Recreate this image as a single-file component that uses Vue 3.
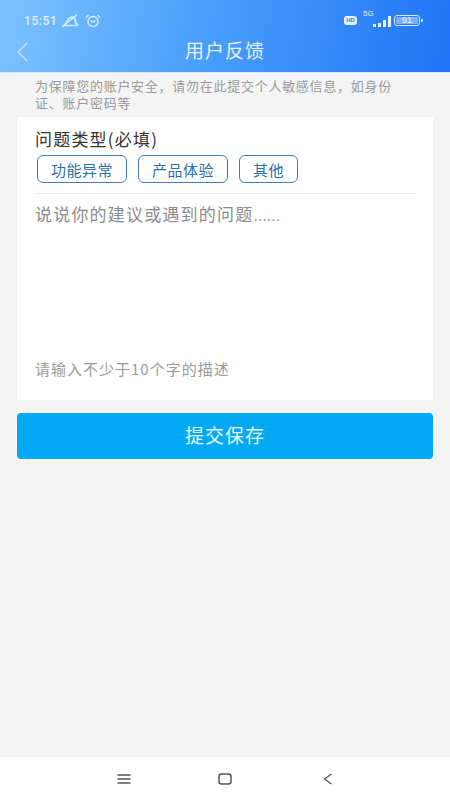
<script setup>
const tags = ['功能异常', '产品体验', '其他']
</script>

<template>
  <div class="page">
    <header class="header">
      <div class="status">
        <div class="status-left">
          <span class="time">15:51</span>
          <svg class="ic-mute" width="19" height="14" viewBox="0 0 19 14" fill="none" stroke="#d6ecff" stroke-width="1.6" stroke-linecap="round">
            <path d="M3 11.500c2-1 2.500-2.500 3.500-5C7.500 4 10 2.500 12.500 3.500c2 1 2 3 2 4.500 0 1 .8 1.800 2 2.200" />
            <path d="M3 11.500h13.500" />
            <path d="M1.500 12.500 15.500 1" />
          </svg>
          <svg class="ic-alarm" width="16" height="14" viewBox="0 0 16 14" fill="none" stroke="#d6ecff" stroke-width="1.500">
            <circle cx="8" cy="7.500" r="5" />
            <path d="M1 3.500 3.500 1M15 3.500 12.500 1" />
            <path d="M5.800 6.500c1 2 3.400 2 4.400 0" />
          </svg>
        </div>
        <div class="status-right">
          <span class="hd">HD</span>
          <div class="signal">
            <span class="five-g">5G</span>
            <div class="bars">
              <i class="b1"></i><i class="b2"></i><i class="b3"></i><i class="b4"></i>
            </div>
          </div>
          <div class="battery"><span class="level">91</span></div>
          <span class="battery-tip"></span>
        </div>
      </div>
      <div class="navbar">
        <svg class="back" width="14" height="20" viewBox="0 0 14 20" fill="none" stroke="#cfe6fd" stroke-width="1.200">
          <path d="M12 1 3 10l9 9" />
        </svg>
        <h1 class="title">用户反馈</h1>
      </div>
    </header>

    <main class="content">
      <p class="notice">为保障您的账户安全，请勿在此提交个人敏感信息，如身份证、账户密码等</p>
      <section class="card">
        <h2 class="label">问题类型(必填)</h2>
        <div class="tags">
          <span v-for="tag in tags" :key="tag" class="tag">{{ tag }}</span>
        </div>
        <div class="field">
          <p class="placeholder">说说你的建议或遇到的问题<span class="dots">......</span></p>
          <p class="hint">请输入不少于10个字的描述</p>
        </div>
      </section>
      <button class="submit" type="button">提交保存</button>
    </main>

    <footer class="sysnav">
      <svg width="14" height="12" viewBox="0 0 14 12" fill="none" stroke="#555" stroke-width="1.300">
        <path d="M0.500 2h13M0.500 6h13M0.500 10h13" />
      </svg>
      <svg class="home" width="14" height="12" viewBox="0 0 14 12" fill="none" stroke="#555" stroke-width="1.500">
        <rect x="1" y="1" width="12" height="10" rx="2.500" />
      </svg>
      <svg class="nav-back" width="10" height="12" viewBox="0 0 10 12" fill="none" stroke="#555" stroke-width="1.300">
        <path d="M8.500 1 1.500 6l7 5" />
      </svg>
    </footer>
  </div>
</template>

<style>
html, body { margin: 0; padding: 0; background: #f4f4f4; }
</style>

<style scoped>
.page {
  width: 450px;
  height: 800px;
  display: flex;
  flex-direction: column;
  overflow: hidden;
  background: #f4f4f4;
  font-family: "Noto Sans CJK SC", "Liberation Sans", sans-serif;
}
.header {
  height: 73px;
  flex: none;
  background: linear-gradient(100deg, #7cc2fe 0%, #4a9ffb 45%, #1f74f5 100%);
  border-bottom: 1px solid #d8e9fb;
  box-sizing: border-box;
}
.status {
  height: 35px;
  padding: 6px 27px 0 24px;
  box-sizing: border-box;
  display: flex;
  align-items: center;
  justify-content: space-between;
}
.status-left { display: flex; align-items: center; }
.time {
  font-family: "Roboto", "Liberation Sans", sans-serif;
  font-size: 12px;
  font-weight: 500;
  letter-spacing: 0.6px;
  color: #e2f1ff;
}
.ic-mute { margin-left: 4px; }
.ic-alarm { margin-left: 5px; }
.status-right { display: flex; align-items: center; }
.hd {
  width: 13px;
  height: 9px;
  border-radius: 3px;
  background: #e8f3ff;
  color: #2b7df5;
  font-family: "Liberation Sans", sans-serif;
  font-size: 6px;
  font-weight: 700;
  line-height: 9px;
  text-align: center;
}
.signal { position: relative; width: 30px; height: 12px; margin-left: 6px; }
.five-g {
  position: absolute;
  left: 0;
  top: -6px;
  font-family: "Liberation Sans", sans-serif;
  font-size: 8px;
  color: #e8f3ff;
}
.bars {
  position: absolute;
  left: 10px;
  bottom: 0;
  display: flex;
  align-items: flex-end;
  gap: 2px;
}
.bars i { display: block; width: 3px; background: #eaf4ff; }
.b1 { height: 3px; }
.b2 { height: 4px; }
.b3 { height: 7px; }
.b4 { height: 11px; }
.battery {
  width: 22px;
  height: 7px;
  margin-left: 1px;
  border: 1px solid #d4e8ff;
  border-radius: 3px;
  padding: 1px;
  display: flex;
  box-sizing: content-box;
}
.level {
  flex: 1;
  background: #7fb2f4;
  border-radius: 1px;
  color: #f0f7ff;
  font-family: "Liberation Sans", sans-serif;
  font-size: 9px;
  line-height: 7px;
  text-align: center;
}
.battery-tip {
  width: 2px;
  height: 3px;
  margin-left: 1px;
  background: #d4e8ff;
  border-radius: 0 1px 1px 0;
}
.navbar {
  position: relative;
  height: 30px;
  display: flex;
  align-items: center;
  justify-content: center;
}
.back { position: absolute; left: 15px; top: 7px; }
.title {
  margin: 0;
  font-size: 19px;
  font-weight: 400;
  letter-spacing: 1px;
  line-height: 30px;
  color: #e6f2ff;
}
.content {
  flex: 1;
  padding: 4px 17px 0;
  display: flex;
  flex-direction: column;
}
.notice {
  margin: 0 22px 0 18px;
  font-size: 13px;
  line-height: 17px;
  letter-spacing: 0.730px;
  color: #9a9a9a;
}
.card {
  margin-top: 6px;
  height: 283px;
  padding: 10px 17px 0 18px;
  background: #fff;
  box-sizing: border-box;
  display: flex;
  flex-direction: column;
}
.label {
  margin: 0;
  font-size: 17px;
  font-weight: 400;
  line-height: 24px;
  letter-spacing: 1.200px;
  color: #333;
}
.tags {
  margin-top: 4px;
  display: flex;
  gap: 11px;
  padding: 0 2px 10px;
  border-bottom: 1px solid #ececec;
}
.tag {
  height: 28px;
  padding: 0 13px;
  display: flex;
  align-items: center;
  box-sizing: border-box;
  border: 1px solid #3f7fb5;
  border-radius: 6px;
  font-size: 15px;
  letter-spacing: 0.500px;
  color: #2a6fa8;
}
.field {
  flex: 1;
  display: flex;
  flex-direction: column;
  justify-content: space-between;
  padding-top: 8px;
  padding-bottom: 21px;
}
.placeholder {
  margin: 0;
  font-size: 17px;
  line-height: 24px;
  letter-spacing: 1.200px;
  color: #8c8c8c;
}
.dots {
  font-family: "Liberation Sans", sans-serif;
  font-size: 16px;
  letter-spacing: 0;
}
.hint {
  margin: 0;
  font-size: 15px;
  line-height: 20px;
  letter-spacing: 1px;
  color: #9a9a9a;
}
.submit {
  margin-top: 13px;
  height: 46px;
  flex: none;
  border: 0;
  border-radius: 4px;
  padding: 0 0 3px;
  background: #03a9f4;
  font-family: inherit;
  font-size: 19px;
  letter-spacing: 1px;
  color: #e4f5ff;
}
.sysnav {
  height: 43px;
  flex: none;
  background: #fff;
  display: flex;
  align-items: center;
  padding: 0 0 0 117px;
}
.home { margin-left: 87px; }
.nav-back { margin-left: 91px; }
</style>
